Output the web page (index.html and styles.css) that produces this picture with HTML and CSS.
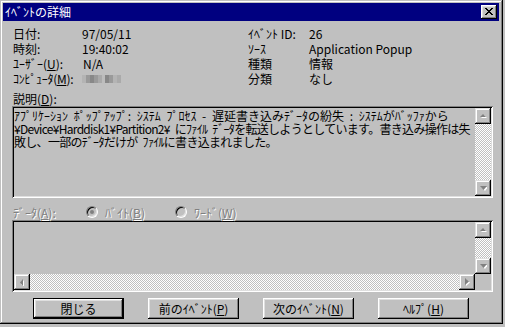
FILE: index.html
```html
<html lang="ja">

<head>
  <meta charset="UTF-8">
  <title>ｲﾍﾞﾝﾄの詳細</title>
  <link rel="stylesheet" href="styles.css">
</head>

<body>
  <div class="window">
    <div class="titlebar">
      <span class="title">ｲﾍﾞﾝﾄの詳細</span>
      <span class="close">
        <svg width="8" height="7" viewBox="0 0 8 7">
          <path d="M0 0h2v1h1v1h2v-1h1v-1h2v1h-1v1h-1v1h-1v1h1v1h1v1h1v1h-2v-1h-1v-1h-2v1h-1v1h-2v-1h1v-1h1v-1h1v-1h-1v-1h-1v-1h-1z" fill="#000"/>
        </svg>
      </span>
    </div>

    <div class="body">
      <div class="info">
        <span>日付:</span><span>97/05/11</span><span>ｲﾍﾞﾝﾄ ID:</span><span>26</span>
        <span>時刻:</span><span>19:40:02</span><span>ｿｰｽ</span><span>Application Popup</span>
        <span>ﾕｰｻﾞｰ(<u>U</u>):</span><span class="na">N/A</span><span>種類</span><span>情報</span>
        <span class="tight">ｺﾝﾋﾟｭｰﾀ(<u>M</u>):</span>
        <span class="blur"><i class="c1"></i><i class="c2"></i><i class="c3"></i><i class="c2"></i><i class="c4"></i><i class="gap"></i><i class="c3"></i><i class="c2"></i><i class="c1"></i><i class="c4"></i></span>
        <span>分類</span><span>なし</span>
      </div>

      <div class="label">説明(<u>D</u>):</div>
      <div class="field desc">
        <div class="text">
          <span class="line">ｱﾌﾟﾘｹｰｼｮﾝ ﾎﾟｯﾌﾟｱｯﾌﾟ: ｼｽﾃﾑ ﾌﾟﾛｾｽ - 遅延書き込みﾃﾞｰﾀの紛失 : ｼｽﾃﾑがﾊﾞｯﾌｧから</span>
          <span class="line narrow">¥Device¥Harddisk1¥Partition2¥ にﾌｧｲﾙ ﾃﾞｰﾀを転送しようとしています。書き込み操作は失</span>
          <span class="line narrow">敗し、一部のﾃﾞｰﾀだけが ﾌｧｲﾙに書き込まれました。</span>
        </div>
        <div class="vscroll">
          <span class="arrow"><svg width="7" height="4" viewBox="0 0 7 4"><path d="M4 1l3 3h-6z" fill="#fff"/><path d="M3 0l3 3h-6z" fill="#808080"/></svg></span>
          <span class="track"></span>
          <span class="arrow"><svg width="7" height="5" viewBox="0 0 7 5"><path d="M1 1h7l-3 4z" fill="#fff"/><path d="M0 0h7l-3.5 4z" fill="#808080"/></svg></span>
        </div>
      </div>

      <div class="data-row disabled">
        <span class="data-label">ﾃﾞｰﾀ(<u>A</u>):</span>
        <label class="radio"><span class="dot checked"></span>ﾊﾞｲﾄ(<u>B</u>)</label>
        <label class="radio"><span class="dot"></span>ﾜｰﾄﾞ(<u>W</u>)</label>
      </div>
      <div class="field data">
        <div class="pane"></div>
        <div class="vscroll">
          <span class="arrow"><svg width="7" height="4" viewBox="0 0 7 4"><path d="M4 1l3 3h-6z" fill="#fff"/><path d="M3 0l3 3h-6z" fill="#808080"/></svg></span>
          <span class="track"></span>
          <span class="arrow"><svg width="7" height="5" viewBox="0 0 7 5"><path d="M1 1h7l-3 4z" fill="#fff"/><path d="M0 0h7l-3.5 4z" fill="#808080"/></svg></span>
        </div>
        <div class="hscroll">
          <span class="arrow"><svg width="4" height="7" viewBox="0 0 4 7"><path d="M4 1v7l-3-3z" fill="#fff"/><path d="M3 0v7l-3-3.5z" fill="#808080"/></svg></span>
          <span class="track"></span>
          <span class="arrow"><svg width="5" height="8" viewBox="0 0 5 8"><path d="M1 1l4 3.5-4 3.5z" fill="#fff"/><path d="M0 0l4 3.5-4 3.5z" fill="#808080"/></svg></span>
        </div>
        <div class="corner"></div>
      </div>

      <div class="buttons">
        <span class="btn default">閉じる</span>
        <span class="btn">前のｲﾍﾞﾝﾄ(<u>P</u>)</span>
        <span class="btn">次のｲﾍﾞﾝﾄ(<u>N</u>)</span>
        <span class="btn">ﾍﾙﾌﾟ(<u>H</u>)</span>
      </div>
    </div>
  </div>
</body>

</html>
```

FILE: styles.css
```css
body {
  margin: 0;
  background: #c0c0c0;
  font-family: "Noto Sans CJK JP", sans-serif;
  font-size: 12px;
  color: #000;
}

u {
  text-decoration: underline;
  text-underline-offset: 1px;
}

.window {
  width: 503px;
  height: 324px;
  box-sizing: border-box;
  padding: 3px;
  background: #c0c0c0;
  box-shadow: inset -1px -1px #000, inset 1px 1px #c0c0c0, inset -2px -2px #808080, inset 2px 2px #fff;
}

.titlebar {
  height: 18px;
  background: #000080;
  display: flex;
  align-items: center;
  justify-content: space-between;
  padding: 0 2px 0 2px;
  margin-right: 1px;
}

.title {
  color: #fff;
  line-height: 18px;
}

.close {
  width: 16px;
  height: 14px;
  box-sizing: border-box;
  background: #c0c0c0;
  box-shadow: inset -1px -1px #000, inset 1px 1px #fff, inset -2px -2px #808080, inset 2px 2px #dfdfdf;
  display: flex;
  align-items: center;
  justify-content: center;
  padding-bottom: 1px;
}

.body {
  padding: 5px 7px 0 9px;
}

.info {
  display: grid;
  grid-template-columns: 69px 166px 61px auto;
  grid-auto-rows: 15px;
  line-height: 15px;
  margin-left: 1px;
  white-space: nowrap;
}

.tight {
  letter-spacing: -0.3px;
}

.na {
  padding-left: 1px;
}

.blur {
  display: flex;
  align-items: center;
  padding-top: 1px;
}

.blur i {
  display: block;
  width: 4px;
  height: 8px;
}

.blur .c1 { background: #b4b4b4; }
.blur .c2 { background: #9a9a9a; }
.blur .c3 { background: #888; }
.blur .c4 { background: #aaa; }
.blur .gap { background: #bdbdbd; width: 3px; }

.label {
  margin: 5px 0 0 1px;
  line-height: 15px;
}

.field {
  box-sizing: border-box;
  width: 481px;
  padding: 2px;
  box-shadow: inset 1px 1px #808080, inset -1px -1px #fff, inset 2px 2px #000, inset -2px -2px #dfdfdf;
}

.desc {
  height: 92px;
  display: flex;
}

.desc .text {
  flex: 1;
  white-space: nowrap;
  line-height: 13px;
  padding-top: 1px;
  overflow: hidden;
  word-spacing: 3px;
}

.line {
  display: block;
}

.line.narrow {
  letter-spacing: -0.7px;
}

.vscroll {
  width: 16px;
  display: flex;
  flex-direction: column;
}

.hscroll {
  height: 16px;
  display: flex;
}

.track {
  flex: 1;
  background-image: repeating-conic-gradient(#fff 0 25%, #c0c0c0 0 50%);
  background-size: 2px 2px;
}

.arrow {
  width: 16px;
  height: 16px;
  flex: none;
  box-sizing: border-box;
  background: #c0c0c0;
  box-shadow: inset -1px -1px #000, inset 1px 1px #dfdfdf, inset -2px -2px #808080, inset 2px 2px #fff;
  display: flex;
  align-items: center;
  justify-content: center;
}

.data-row {
  display: flex;
  align-items: center;
  height: 16px;
  margin: 6px 0 0 1px;
}

.disabled {
  color: #808080;
  text-shadow: 1px 1px #fff;
}

.data-label {
  width: 73px;
}

.radio {
  display: flex;
  align-items: center;
  width: 89px;
}

.dot {
  width: 12px;
  height: 12px;
  box-sizing: border-box;
  border-radius: 50%;
  border: 1px solid;
  border-color: #808080 #fff #fff #808080;
  box-shadow: inset 1px 1px #000, inset -1px -1px #dfdfdf;
  background: #c0c0c0;
  margin-right: 7px;
  display: flex;
  align-items: center;
  justify-content: center;
}

.dot.checked::after {
  content: "";
  width: 4px;
  height: 4px;
  border-radius: 50%;
  background: #808080;
}

.data {
  height: 72px;
  display: grid;
  grid-template-columns: 1fr 16px;
  grid-template-rows: 1fr 16px;
}

.corner {
  background: #c0c0c0;
}

.buttons {
  display: flex;
  gap: 24px;
  margin: 6px 0 0 21px;
}

.btn {
  width: 91px;
  height: 21px;
  box-sizing: border-box;
  display: flex;
  align-items: center;
  justify-content: center;
  box-shadow: inset -1px -1px #000, inset 1px 1px #fff, inset -2px -2px #808080, inset 2px 2px #dfdfdf;
  padding-bottom: 1px;
}

.btn.default {
  border: 1px solid #000;
}
```
